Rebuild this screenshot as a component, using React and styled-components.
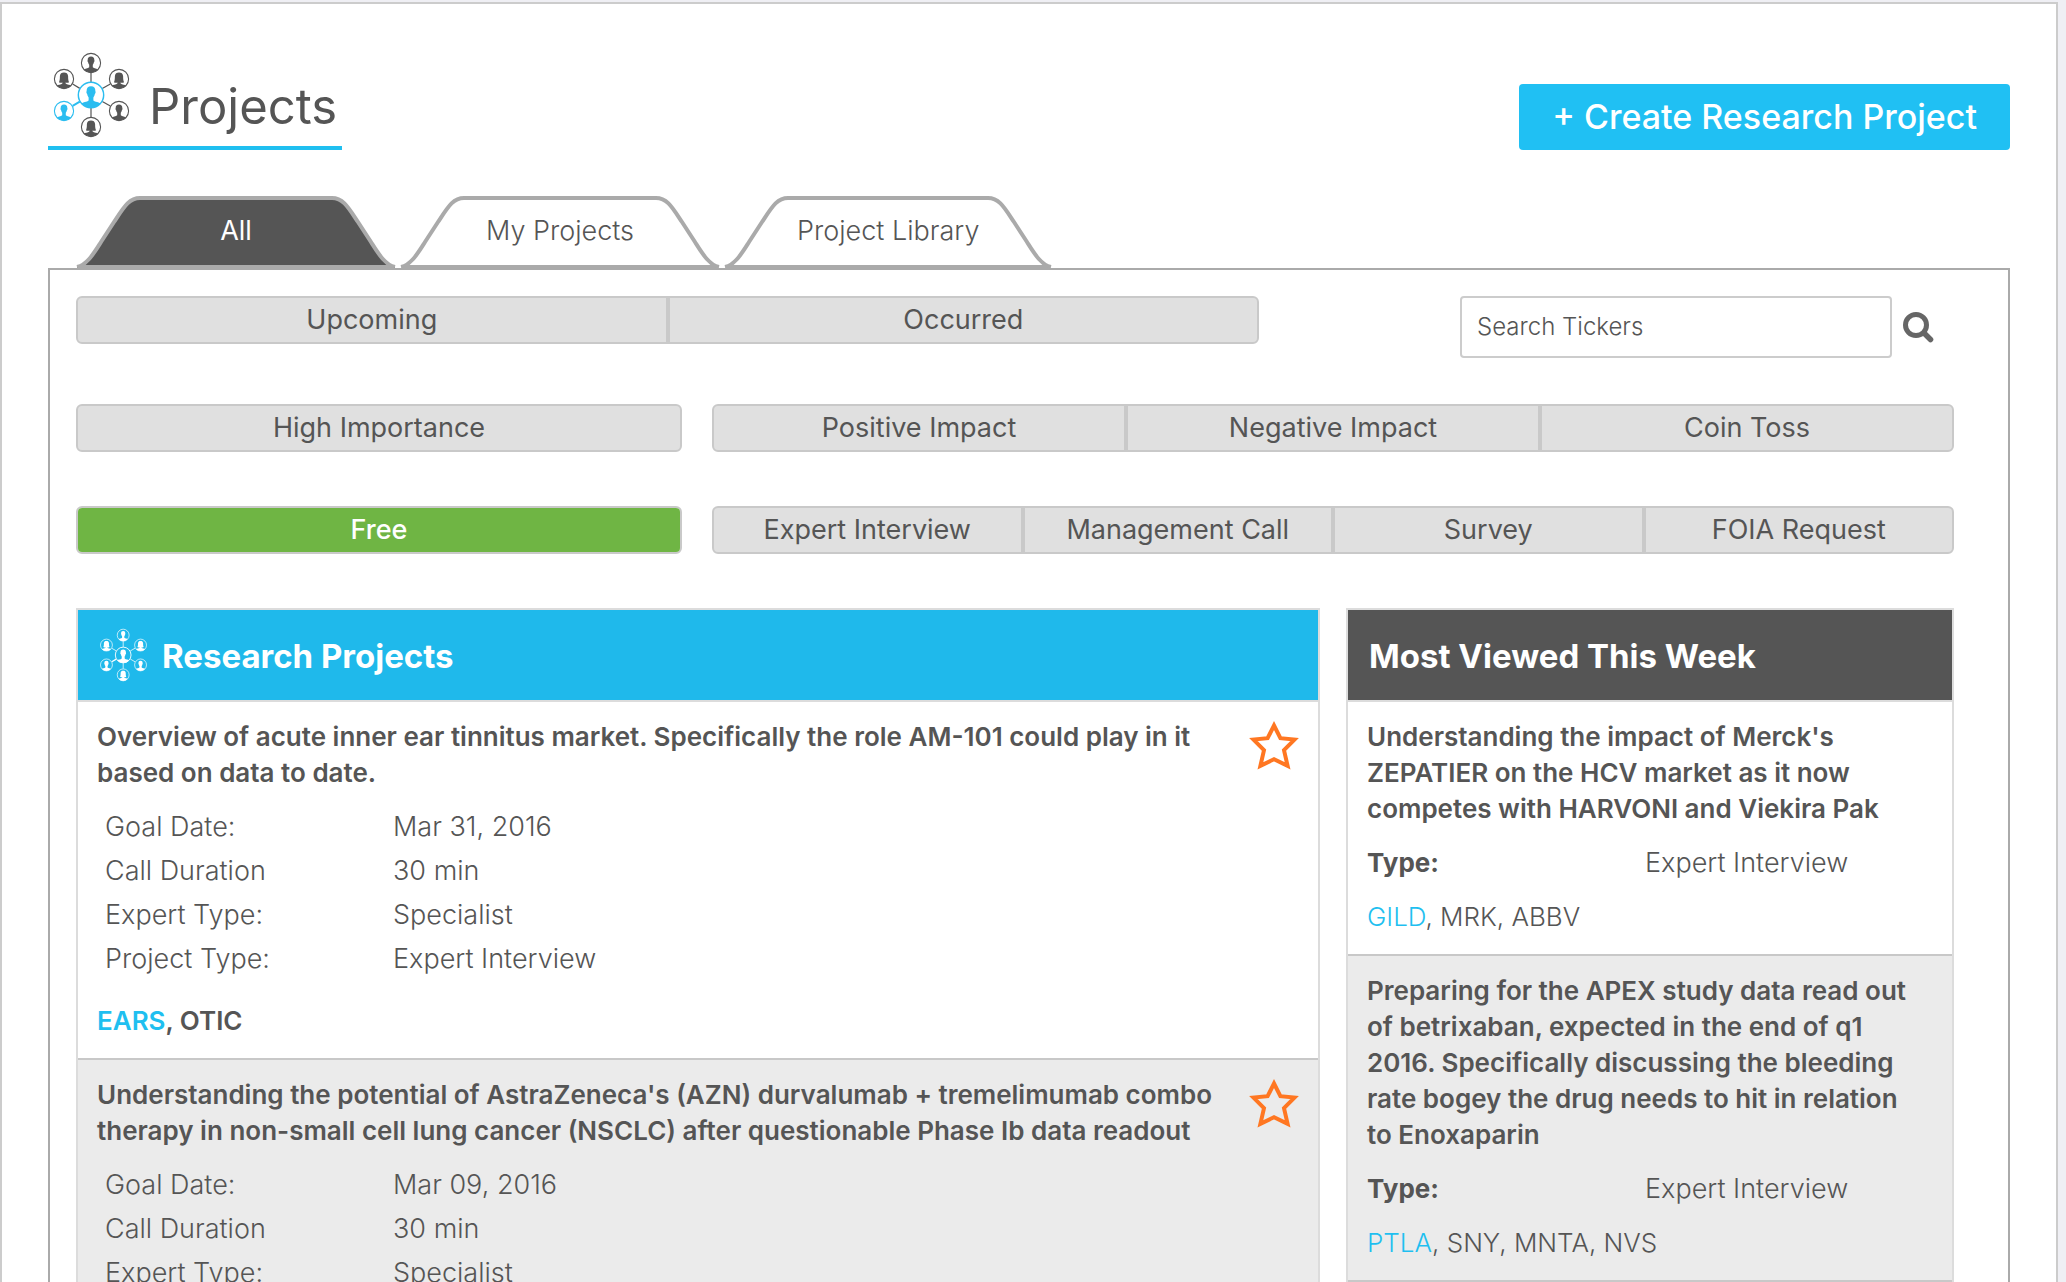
import React, { useState } from 'react';
import styled, { createGlobalStyle, css } from 'styled-components';

const GlobalStyle = createGlobalStyle`
  * {
    box-sizing: border-box;
  }

  body {
    margin: 0;
    background: #efeff4;
    color: #555;
    font-family: Inter, "Liberation Sans", sans-serif;
    font-size: 27px;
    font-weight: 300;
    line-height: 36px;
  }

  button, input {
    font: inherit;
    color: inherit;
  }
`;

const projects = [
  {
    title: 'Overview of acute inner ear tinnitus market. Specifically the role AM-101 could play in it\nbased on data to date.',
    details: [
      ['Goal Date:', 'Mar 31, 2016'],
      ['Call Duration', '30 min'],
      ['Expert Type:', 'Specialist'],
      ['Project Type:', 'Expert Interview'],
    ],
    ticker: 'EARS',
    related: ', OTIC',
  },
  {
    title: "Understanding the potential of AstraZeneca's (AZN) durvalumab + tremelimumab combo\ntherapy in non-small cell lung cancer (NSCLC) after questionable Phase Ib data readout",
    details: [
      ['Goal Date:', 'Mar 09, 2016'],
      ['Call Duration', '30 min'],
      ['Expert Type:', 'Specialist'],
    ],
  },
];

const mostViewed = [
  {
    title: "Understanding the impact of Merck's\nZEPATIER on the HCV market as it now\ncompetes with HARVONI and Viekira Pak",
    type: 'Expert Interview',
    ticker: 'GILD',
    related: ', MRK, ABBV',
  },
  {
    title: 'Preparing for the APEX study data read out\nof betrixaban, expected in the end of q1\n2016. Specifically discussing the bleeding\nrate bogey the drug needs to hit in relation\nto Enoxaparin',
    type: 'Expert Interview',
    ticker: 'PTLA',
    related: ', SNY, MNTA, NVS',
  },
];

const nodes = [
  { x: 39, y: 11 },
  { x: 12, y: 27, female: true },
  { x: 67, y: 27, female: true },
  { x: 12, y: 59, accent: true },
  { x: 67, y: 59 },
  { x: 39, y: 75, female: true },
];

const Person = ({ x, y, scale = 1, female, color, fill }) => (
  <g transform={`translate(${x} ${y}) scale(${scale})`}>
    <circle r="9.6" fill={fill} stroke={color} strokeWidth="1.1" />
    {female ? (
      <path fill={color} d="M-5 3.2C-4 1-4.2-1-4.1-3C-3.9-5.6-2.4-6.6 0-6.6S3.9-5.6 4.1-3C4.2-1 4 1 5 3.2C4 4 2.6 3.8 1.6 3.4V4.4C3 5.8 6.2 5.4 7.2 6.6A9.8 9.8 0 0 1-7.2 6.6C-6.2 5.4-3 5.8-1.6 4.4V3.4C-2.6 3.8-4 4-5 3.2Z" />
    ) : (
      <path fill={color} d="M0-6.6C2.3-6.6 3.4-5.2 3.3-3C3.6-2.4 3.6-1.4 2.9-.8C2.7.5 2.2 1.2 1.8 1.8V4.2C3 5.6 6.2 5.2 7.2 6.6A9.8 9.8 0 0 1-7.2 6.6C-6.2 5.2-3 5.6-1.8 4.2V1.8C-2.2 1.2-2.7.5-2.9-.8C-3.6-1.4-3.6-2.4-3.3-3C-3.4-5.2-2.3-6.6 0-6.6Z" />
    )}
  </g>
);

// spokes run from rim to rim, so they stay hidden when the circles have no fill
const spoke = ({ x, y }) => {
  const length = Math.hypot(x - 39, y - 43);
  const dx = (x - 39) / length;
  const dy = (y - 43) / length;
  return { x1: 39 + dx * 13, y1: 43 + dy * 13, x2: x - dx * 10, y2: y - dy * 10 };
};

const NetworkIcon = ({ color, accent, fill, width, height }) => (
  <svg width={width} height={height} viewBox="0 0 79 86" aria-hidden="true">
    {nodes.map((n) => (
      <line
        key={`${n.x}-${n.y}`}
        {...spoke(n)}
        stroke={n.accent ? accent : color}
        strokeWidth={n.accent ? 2 : 1.2}
      />
    ))}
    {nodes.map((n) => (
      <Person key={`${n.x}-${n.y}`} {...n} color={n.accent ? accent : color} fill={fill} />
    ))}
    <Person x={39} y={43} scale={1.32} color={accent} fill={fill} />
  </svg>
);

const Slope = ({ active, flip }) => (
  <SlopeSvg viewBox="0 0 64 72" $flip={flip} aria-hidden="true">
    <path d="M1 71C11 69 18 57 25 46L38 26C48 11 53 2 64 2V72H1Z" fill={active ? '#555' : '#fff'} />
    <path d="M4 70.5H64" stroke="#aaa" strokeWidth="3" />
    <path d="M1 71C11 69 18 57 25 46L38 26C48 11 53 2 64 2" fill="none" stroke="#aaa" strokeWidth="4" />
  </SlopeSvg>
);

const FilterGroup = ({ items, selected }) => (
  <Group>
    {items.map((label) => (
      <Filter key={label} type="button" aria-pressed={label === selected} $on={label === selected}>
        {label}
      </Filter>
    ))}
  </Group>
);

const App = () => {
  const [tab, setTab] = useState('All');

  return (
    <>
      <GlobalStyle />
      <Page>
        <Header>
          <PageTitle>
            <NetworkIcon width={79} height={86} color="#555" accent="#2bbdf0" fill="#fff" />
            <h1>Projects</h1>
          </PageTitle>
          <CreateButton type="button">+ Create Research Project</CreateButton>
        </Header>

        <Tabs role="tablist">
          {['All', 'My Projects', 'Project Library'].map((name) => (
            <Tab key={name} type="button" role="tab" aria-selected={tab === name} onClick={() => setTab(name)}>
              <Slope active={tab === name} />
              <TabLabel $active={tab === name}>{name}</TabLabel>
              <Slope active={tab === name} flip />
            </Tab>
          ))}
        </Tabs>

        <Panel>
          <SearchRow>
            <FilterGroup items={['Upcoming', 'Occurred']} />
            <Search role="search" onSubmit={(e) => e.preventDefault()}>
              <SearchInput type="text" placeholder="Search Tickers" aria-label="Search Tickers" />
              <SearchButton type="submit" aria-label="Search">
                <svg width="32" height="32" viewBox="0 0 32 32" fill="none" stroke="#666" aria-hidden="true">
                  <circle cx="14" cy="14" r="10.5" strokeWidth="5" />
                  <path d="M22.5 22.5L28.5 28.5" strokeWidth="5.5" strokeLinecap="round" />
                </svg>
              </SearchButton>
            </Search>
          </SearchRow>
          <FilterRow>
            <FilterGroup items={['High Importance']} />
            <FilterGroup items={['Positive Impact', 'Negative Impact', 'Coin Toss']} />
          </FilterRow>
          <FilterRow>
            <FilterGroup items={['Free']} selected="Free" />
            <FilterGroup items={['Expert Interview', 'Management Call', 'Survey', 'FOIA Request']} />
          </FilterRow>

          <Columns>
            <Card>
              <CardHeader $blue>
                <NetworkIcon width={49} height={54} color="#fff" accent="#fff" fill="none" />
                <h2>Research Projects</h2>
              </CardHeader>
              {projects.map((p) => (
                <Item key={p.title}>
                  <ItemTop>
                    <ItemTitle>{p.title}</ItemTitle>
                    <StarButton type="button" aria-label="Add to favorites">
                      <svg width="52" height="52" viewBox="0 0 52 52" aria-hidden="true">
                        <path
                          d="M27 6.5L33.4 19.2L47.5 20.6L37 31.2L40.6 46.8L27 40.2L13.4 46.8L17 31.2L6.5 20.6L20.6 19.2Z"
                          fill="none"
                          stroke="#ff7722"
                          strokeWidth="4"
                        />
                      </svg>
                    </StarButton>
                  </ItemTop>
                  <Details>
                    {p.details.map(([label, value]) => (
                      <React.Fragment key={label}>
                        <dt>{label}</dt>
                        <dd>{value}</dd>
                      </React.Fragment>
                    ))}
                  </Details>
                  {p.ticker && (
                    <Tickers $strong>
                      <a href="#ticker">{p.ticker}</a>
                      {p.related}
                    </Tickers>
                  )}
                </Item>
              ))}
            </Card>

            <Card>
              <CardHeader>
                <h2>Most Viewed This Week</h2>
              </CardHeader>
              {mostViewed.map((p) => (
                <Item key={p.title}>
                  <ItemTitle>{p.title}</ItemTitle>
                  <TypeRow>
                    <dt>Type:</dt>
                    <dd>{p.type}</dd>
                  </TypeRow>
                  <Tickers>
                    <a href="#ticker">{p.ticker}</a>
                    {p.related}
                  </Tickers>
                </Item>
              ))}
            </Card>
          </Columns>
        </Panel>
      </Page>
    </>
  );
};

const Page = styled.main`
  min-height: 100vh;
  margin: 2px 8px 0 0;
  padding: 48px 46px 0;
  background: #fff;
  border: 2px solid #ccc;
  border-bottom: 0;
`;

const Header = styled.header`
  display: flex;
  justify-content: space-between;
  align-items: flex-end;
`;

const PageTitle = styled.div`
  display: flex;
  align-items: flex-end;
  gap: 18px;
  padding: 0 5px 8px 4px;
  border-bottom: 4px solid #1fbff0;

  h1 {
    margin: 0;
    font-size: 49px;
    font-weight: 400;
    line-height: 62px;
  }
`;

const CreateButton = styled.button`
  height: 66px;
  padding: 0 33px;
  border: 0;
  border-radius: 4px;
  background: #20c0f3;
  color: #fff;
  font-size: 34px;
  font-weight: 500;
  cursor: pointer;
`;

const Tabs = styled.div`
  display: flex;
  gap: 4px;
  margin-top: 46px;
  padding-left: 28px;
`;

const Tab = styled.button`
  display: flex;
  height: 72px;
  padding: 0;
  border: 0;
  background: none;
  cursor: pointer;
`;

const SlopeSvg = styled.svg`
  width: 64px;
  height: 72px;
  ${({ $flip }) => $flip && 'transform: scaleX(-1);'}
`;

const TabLabel = styled.span`
  min-width: 192px;
  height: 72px;
  padding: 0 9px;
  border-top: 4px solid #aaa;
  border-bottom: 3px solid #aaa;
  background: ${({ $active }) => ($active ? '#555' : '#fff')};
  color: ${({ $active }) => ($active ? '#fff' : '#555')};
  font-weight: ${({ $active }) => ($active ? 400 : 300)};
  line-height: 62px;
`;

const Panel = styled.section`
  padding: 26px 54px 0 26px;
  border: 2px solid #aaa;
  border-bottom: 0;
`;

const SearchRow = styled.div`
  display: grid;
  grid-template-columns: 63% 1fr;
  align-items: start;
  margin-bottom: 46px;
`;

const FilterRow = styled.div`
  display: grid;
  grid-template-columns: minmax(0, 1fr) minmax(0, 2fr);
  gap: 30px;
  margin-bottom: 54px;

  /* eight of twelve columns, inner gutter included */
  & > :last-child {
    margin-left: -10px;
  }

  & > :first-child {
    margin-right: 10px;
  }
`;

const Group = styled.div`
  display: flex;
  height: 48px;
  overflow: hidden;
  border: 2px solid #c9c9c9;
  border-radius: 6px;
  background: #e0e0e0;
`;

const Filter = styled.button`
  flex: 1;
  padding: 0 0 1px;
  border: 0;
  background: none;
  font-weight: 400;
  cursor: pointer;

  & + & {
    border-left: 4px solid #c9c9c9;
  }

  ${({ $on }) =>
    $on &&
    css`
      background: #6fb544;
      color: #fff;
      font-weight: 500;
    `}
`;

const Search = styled.form`
  display: flex;
  justify-content: flex-end;
  align-items: center;
  gap: 10px;
  padding-right: 20px;
`;

const SearchInput = styled.input`
  width: 432px;
  height: 62px;
  padding: 0 15px 2px;
  border: 2px solid #ccc;
  border-radius: 4px;
  background: #fff;
  font-size: 24px;

  &::placeholder {
    color: #555;
    opacity: 1;
  }
`;

const SearchButton = styled.button`
  display: flex;
  padding: 0;
  border: 0;
  background: none;
  cursor: pointer;
`;

const Columns = styled.div`
  display: grid;
  grid-template-columns: minmax(0, 311fr) minmax(0, 152fr);
  gap: 26px;
`;

const Card = styled.section`
  border: 2px solid #dcdcdc;
  border-bottom: 0;
`;

const CardHeader = styled.header`
  display: flex;
  align-items: center;
  gap: 14px;
  height: 92px;
  padding: 0 21px;
  border-bottom: 2px solid #dcdcdc;
  background: ${({ $blue }) => ($blue ? '#1fb9eb' : '#555')};
  color: #fff;

  h2 {
    margin: 2px 0 0;
    font-size: 33px;
    font-weight: 700;
    line-height: 40px;
  }
`;

const Item = styled.article`
  padding: 17px 19px;
  border-bottom: 2px solid #c8c8c8;

  &:nth-of-type(even) {
    background: #ebebeb;
  }
`;

const ItemTop = styled.div`
  display: flex;
  justify-content: space-between;
  height: 72px;
`;

const ItemTitle = styled.h3`
  margin: 0;
  font-size: 26px;
  font-weight: 600;
  line-height: 36px;
  white-space: pre-line;
`;

const StarButton = styled.button`
  flex: none;
  height: 52px;
  padding: 0;
  border: 0;
  background: none;
  cursor: pointer;
`;

const Details = styled.dl`
  display: grid;
  grid-template-columns: 288px 1fr;
  margin: 14px 0 22px;
  padding-left: 8px;
  line-height: 44px;

  dd {
    margin: 0;
  }
`;

const TypeRow = styled.dl`
  display: grid;
  grid-template-columns: 278px 1fr;
  margin: 18px 0;

  dt {
    font-size: 26px;
    font-weight: 700;
  }

  dd {
    margin: 0;
  }
`;

const Tickers = styled.p`
  margin: 0 0 2px;
  font-size: 26px;
  font-weight: ${({ $strong }) => ($strong ? 600 : 300)};

  a {
    color: #1fbff0;
    text-decoration: none;
  }
`;

export default App;
